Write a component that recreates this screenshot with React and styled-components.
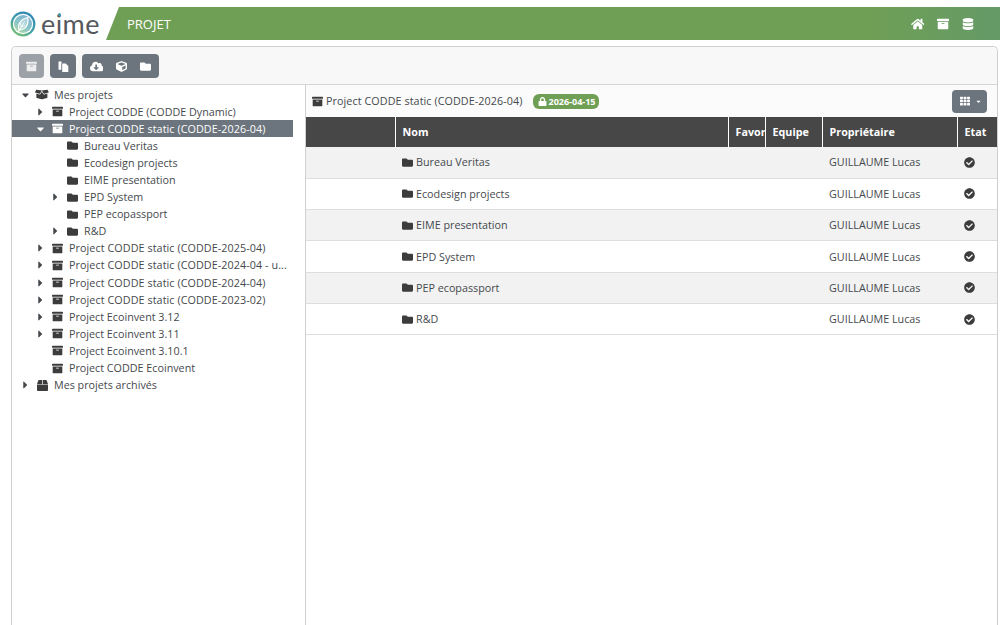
import styled, { createGlobalStyle } from "styled-components";
import {
  FaArchive,
  FaBox,
  FaBoxOpen,
  FaCaretDown,
  FaCaretRight,
  FaCheckCircle,
  FaCloudDownloadAlt,
  FaCube,
  FaDatabase,
  FaFolder,
  FaHome,
  FaLock,
  FaTh,
} from "react-icons/fa";

const GlobalStyle = createGlobalStyle`
  html, body {
    margin: 0;
    height: 100%;
    overflow: hidden;
    background: #fff;
  }
  body {
    font-family: "Open Sans", "Noto Sans", sans-serif;
    font-size: 10.75px;
    color: #45494d;
  }
`;

const Page = styled.div`
  width: 1000px;
  height: 625px;
  display: flex;
  flex-direction: column;
  overflow: hidden;
`;

const Header = styled.header`
  height: 33px;
  margin-top: 7px;
  display: flex;
  align-items: stretch;
`;

const Brand = styled.div`
  width: 106px;
  padding-left: 10px;
  box-sizing: border-box;
  display: flex;
  align-items: center;
  gap: 5px;
`;

const BrandName = styled.span`
  font-family: "Lato", sans-serif;
  font-size: 27px;
  font-weight: 400;
  line-height: 33px;
  letter-spacing: 0.4px;
  color: #55595d;
`;

const BrandDot = styled.span`
  position: relative;

  &::after {
    content: "";
    position: absolute;
    left: 2px;
    top: 6px;
    width: 3px;
    height: 3px;
    border-radius: 50%;
    background: #3d9bb0;
  }
`;

const TitleBar = styled.div`
  flex: 1;
  display: flex;
  align-items: center;
  justify-content: space-between;
  padding: 0 26px 0 21px;
  background: linear-gradient(90deg, #6f9f55 0%, #6f9f55 85%, #659a67 100%);
  clip-path: polygon(13px 0, 100% 0, 100% 100%, 0 100%);
  color: #fff;
`;

const PageTitle = styled.span`
  font-size: 13px;
  padding-top: 1px;
`;

const NavIcons = styled.nav`
  display: flex;
  align-items: center;
  gap: 13px;
  font-size: 12px;
`;

const HomeIcon = styled(FaHome)`
  width: 1.125em;
`;

const Panel = styled.main`
  flex: 1;
  margin: 6px 2px 0 11px;
  border: 1px solid #cfcfcf;
  border-bottom: 0;
  border-radius: 5px 5px 0 0;
  display: flex;
  flex-direction: column;
  min-height: 0;
`;

const Toolbar = styled.div`
  height: 38px;
  flex: none;
  box-sizing: border-box;
  padding: 7px;
  display: flex;
  gap: 6px;
  background: #f8f8f8;
  border-bottom: 1px solid #d5d5d5;
  border-radius: 5px 5px 0 0;
`;

const ToolGroup = styled.div`
  display: flex;
  align-items: center;
  height: 24px;
  padding: 0 ${(p) => (p.$muted ? "7px" : "7.5px")};
  gap: ${(p) => (p.$wide ? "13px" : "0")};
  border-radius: 4px;
  background: ${(p) => (p.$muted ? "#9ca1a7" : "#6c757d")};
  color: ${(p) => (p.$muted ? "#eceded" : "#fff")};
  font-size: 11px;
`;

const CloudIcon = styled(FaCloudDownloadAlt)`
  width: 1.25em;
`;

const Body = styled.div`
  flex: 1;
  display: flex;
  min-height: 0;
`;

const Tree = styled.aside`
  width: 293px;
  flex: none;
  padding-top: 1px;
  border-right: 1px solid #d0d0d0;
`;

const TreeRow = styled.div`
  height: 17.1px;
  width: 281px;
  display: flex;
  align-items: center;
  padding-left: ${(p) => p.$level * 15 + 10}px;
  box-sizing: border-box;
  white-space: nowrap;
  background: ${(p) => (p.$selected ? "#6c757d" : "transparent")};
  color: ${(p) => (p.$selected ? "#fff" : "#45494d")};
`;

const Caret = styled.span`
  width: 7px;
  margin-right: 3px;
  flex: none;
  display: flex;
  align-items: center;
  justify-content: center;
  font-size: 12px;
`;

const TreeIcon = styled.span`
  width: ${(p) => (p.$wide ? "14px" : "11px")};
  margin: 0 ${(p) => (p.$wide ? "5px" : "6px")} 0 ${(p) => (p.$wide ? "3px" : "5px")};
  flex: none;
  display: flex;
  align-items: center;
  justify-content: center;
  font-size: 11px;
  color: ${(p) => (p.$selected ? "#fff" : "#3c3c3c")};
`;

const BoxOpenIcon = styled(FaBoxOpen)`
  width: 1.25em;
`;

const TreeLabel = styled.span`
  letter-spacing: ${(p) => (p.$dated ? "0.08px" : "0")};
`;

const Content = styled.section`
  flex: 1;
  min-width: 0;
  display: flex;
  flex-direction: column;
`;

const ContentBar = styled.div`
  height: 32px;
  flex: none;
  box-sizing: border-box;
  padding: 0 10px 0 6px;
  display: flex;
  align-items: center;
  background: #fbfbfb;
`;

const CurrentProject = styled.span`
  display: flex;
  align-items: center;
  gap: 3px;
  letter-spacing: 0.08px;

  svg {
    font-size: 11px;
    color: #3c3c3c;
  }
`;

const VersionBadge = styled.span`
  display: flex;
  align-items: center;
  gap: 2px;
  height: 15px;
  margin-left: 10px;
  padding: 0 4px 0 5px;
  border-radius: 6px;
  background: #6f9f55;
  color: #fff;
  font-size: 9px;
  font-weight: 700;
`;

const ViewButton = styled.button`
  margin-left: auto;
  width: 35px;
  height: 23px;
  border: 0;
  border-radius: 4px;
  background: #6c757d;
  color: #fff;
  display: flex;
  align-items: center;
  justify-content: center;
  gap: 5px;
  font-size: 10px;
  padding: 0 0 0 3px;
`;

const SmallCaret = styled.span`
  display: flex;
  font-size: 7px;
`;

const Table = styled.table`
  width: 100%;
  table-layout: fixed;
  border-collapse: collapse;
`;

const HeadCell = styled.th`
  height: 30px;
  padding: 0 7px;
  box-sizing: border-box;
  background: #474747;
  color: #fff;
  font-weight: 700;
  text-align: left;
  white-space: nowrap;
  overflow: hidden;
  border-left: 1px solid #fff;

  &:first-child {
    border-left: 0;
  }
`;

const Row = styled.tr`
  background: ${(p) => (p.$striped ? "#f2f2f2" : "#fff")};
  border-bottom: 1px solid #dedede;
`;

const Cell = styled.td`
  height: 31.3px;
  padding: 0 7px;
  box-sizing: border-box;
  white-space: nowrap;
`;

const Folder = styled.span`
  display: flex;
  align-items: center;
  gap: 3px;

  svg {
    font-size: 11px;
    color: #3c3c3c;
  }
`;

const StateIcon = styled.span`
  display: flex;
  font-size: 11px;
  color: #3c3c3c;
`;

function Logo() {
  return (
    <svg width="26" height="26" viewBox="0 0 26 26" aria-hidden="true">
      <defs>
        <linearGradient id="ring" x1="0.8" y1="0" x2="0.2" y2="1">
          <stop offset="0" stopColor="#2f83b5" />
          <stop offset="0.55" stopColor="#3f9fa8" />
          <stop offset="1" stopColor="#7cc36a" />
        </linearGradient>
      </defs>
      <circle cx="13" cy="13" r="12.4" fill="url(#ring)" />
      <circle cx="13" cy="13" r="10.2" fill="#fff" />
      <circle cx="13" cy="13" r="9" fill="url(#ring)" opacity="0.62" />
      <path
        d="M9 19.5 C7 13 11 8 17.8 6.5 C19 13 16 18.5 10.5 18.5 Z"
        fill="#fff"
        fillOpacity="0.35"
        stroke="#fff"
        strokeWidth="1.1"
      />
      <path d="M8 21.5 L14.5 10.5 M11.5 15.5 L15.5 14.5 M11 15.5 L10.6 12" stroke="#fff" strokeWidth="0.8" fill="none" />
    </svg>
  );
}

// small sheet behind, larger sheet with a cut corner in front
function CopyIcon() {
  return (
    <svg width="11" height="11" viewBox="0 0 11 11" fill="currentColor" aria-hidden="true">
      <path d="M0.5 0.5 H3.6 V2.2 H3.3 V8.8 H0.5 Z" />
      <path d="M4.2 2.4 H7.6 L10.3 5 V11 H4.2 Z" />
    </svg>
  );
}

const treeRows = [
  { level: 0, open: true, wide: true, icon: BoxOpenIcon, label: "Mes projets" },
  { level: 1, closed: true, icon: FaArchive, label: "Project CODDE (CODDE Dynamic)" },
  { level: 1, open: true, selected: true, icon: FaArchive, label: "Project CODDE static (CODDE-2026-04)" },
  { level: 2, icon: FaFolder, label: "Bureau Veritas" },
  { level: 2, icon: FaFolder, label: "Ecodesign projects" },
  { level: 2, icon: FaFolder, label: "EIME presentation" },
  { level: 2, closed: true, icon: FaFolder, label: "EPD System" },
  { level: 2, icon: FaFolder, label: "PEP ecopassport" },
  { level: 2, closed: true, icon: FaFolder, label: "R&D" },
  { level: 1, closed: true, icon: FaArchive, label: "Project CODDE static (CODDE-2025-04)" },
  { level: 1, closed: true, icon: FaArchive, label: "Project CODDE static (CODDE-2024-04 - u..." },
  { level: 1, closed: true, icon: FaArchive, label: "Project CODDE static (CODDE-2024-04)" },
  { level: 1, closed: true, icon: FaArchive, label: "Project CODDE static (CODDE-2023-02)" },
  { level: 1, closed: true, icon: FaArchive, label: "Project Ecoinvent 3.12" },
  { level: 1, closed: true, icon: FaArchive, label: "Project Ecoinvent 3.11" },
  { level: 1, icon: FaArchive, label: "Project Ecoinvent 3.10.1" },
  { level: 1, icon: FaArchive, label: "Project CODDE Ecoinvent" },
  { level: 0, closed: true, icon: FaBox, label: "Mes projets archivés" },
];

const folders = ["Bureau Veritas", "Ecodesign projects", "EIME presentation", "EPD System", "PEP ecopassport", "R&D"];

const columns = [
  { label: "", width: 89 },
  { label: "Nom", width: 333 },
  { label: "Favor", width: 37 },
  { label: "Equipe", width: 57 },
  { label: "Propriétaire", width: 135 },
  { label: "Etat", width: 40 },
];

export default function App() {
  return (
    <Page>
      <GlobalStyle />
      <Header>
        <Brand>
          <Logo />
          <BrandName>
            e<BrandDot>i</BrandDot>me
          </BrandName>
        </Brand>
        <TitleBar>
          <PageTitle>PROJET</PageTitle>
          <NavIcons>
            <HomeIcon />
            <FaArchive />
            <FaDatabase />
          </NavIcons>
        </TitleBar>
      </Header>
      <Panel>
        <Toolbar>
          <ToolGroup $muted>
            <FaArchive />
          </ToolGroup>
          <ToolGroup>
            <CopyIcon />
          </ToolGroup>
          <ToolGroup $wide>
            <CloudIcon />
            <FaCube />
            <FaFolder />
          </ToolGroup>
        </Toolbar>
        <Body>
          <Tree>
            {treeRows.map((row) => {
              const Icon = row.icon;
              return (
                <TreeRow key={row.label} $level={row.level} $selected={row.selected}>
                  <Caret>
                    {row.open && <FaCaretDown />}
                    {row.closed && <FaCaretRight />}
                  </Caret>
                  <TreeIcon $selected={row.selected} $wide={row.wide}>
                    <Icon />
                  </TreeIcon>
                  <TreeLabel $dated={row.label.includes("CODDE-")}>{row.label}</TreeLabel>
                </TreeRow>
              );
            })}
          </Tree>
          <Content>
            <ContentBar>
              <CurrentProject>
                <FaArchive />
                Project CODDE static (CODDE-2026-04)
              </CurrentProject>
              <VersionBadge>
                <FaLock />
                2026-04-15
              </VersionBadge>
              <ViewButton>
                <FaTh />
                <SmallCaret>
                  <FaCaretDown />
                </SmallCaret>
              </ViewButton>
            </ContentBar>
            <Table>
              <colgroup>
                {columns.map((col) => (
                  <col key={col.label} width={col.width} />
                ))}
              </colgroup>
              <thead>
                <tr>
                  {columns.map((col) => (
                    <HeadCell key={col.label}>{col.label}</HeadCell>
                  ))}
                </tr>
              </thead>
              <tbody>
                {folders.map((name, i) => (
                  <Row key={name} $striped={i % 2 === 0}>
                    <Cell />
                    <Cell>
                      <Folder>
                        <FaFolder />
                        {name}
                      </Folder>
                    </Cell>
                    <Cell />
                    <Cell />
                    <Cell>GUILLAUME Lucas</Cell>
                    <Cell>
                      <StateIcon>
                        <FaCheckCircle />
                      </StateIcon>
                    </Cell>
                  </Row>
                ))}
              </tbody>
            </Table>
          </Content>
        </Body>
      </Panel>
    </Page>
  );
}
